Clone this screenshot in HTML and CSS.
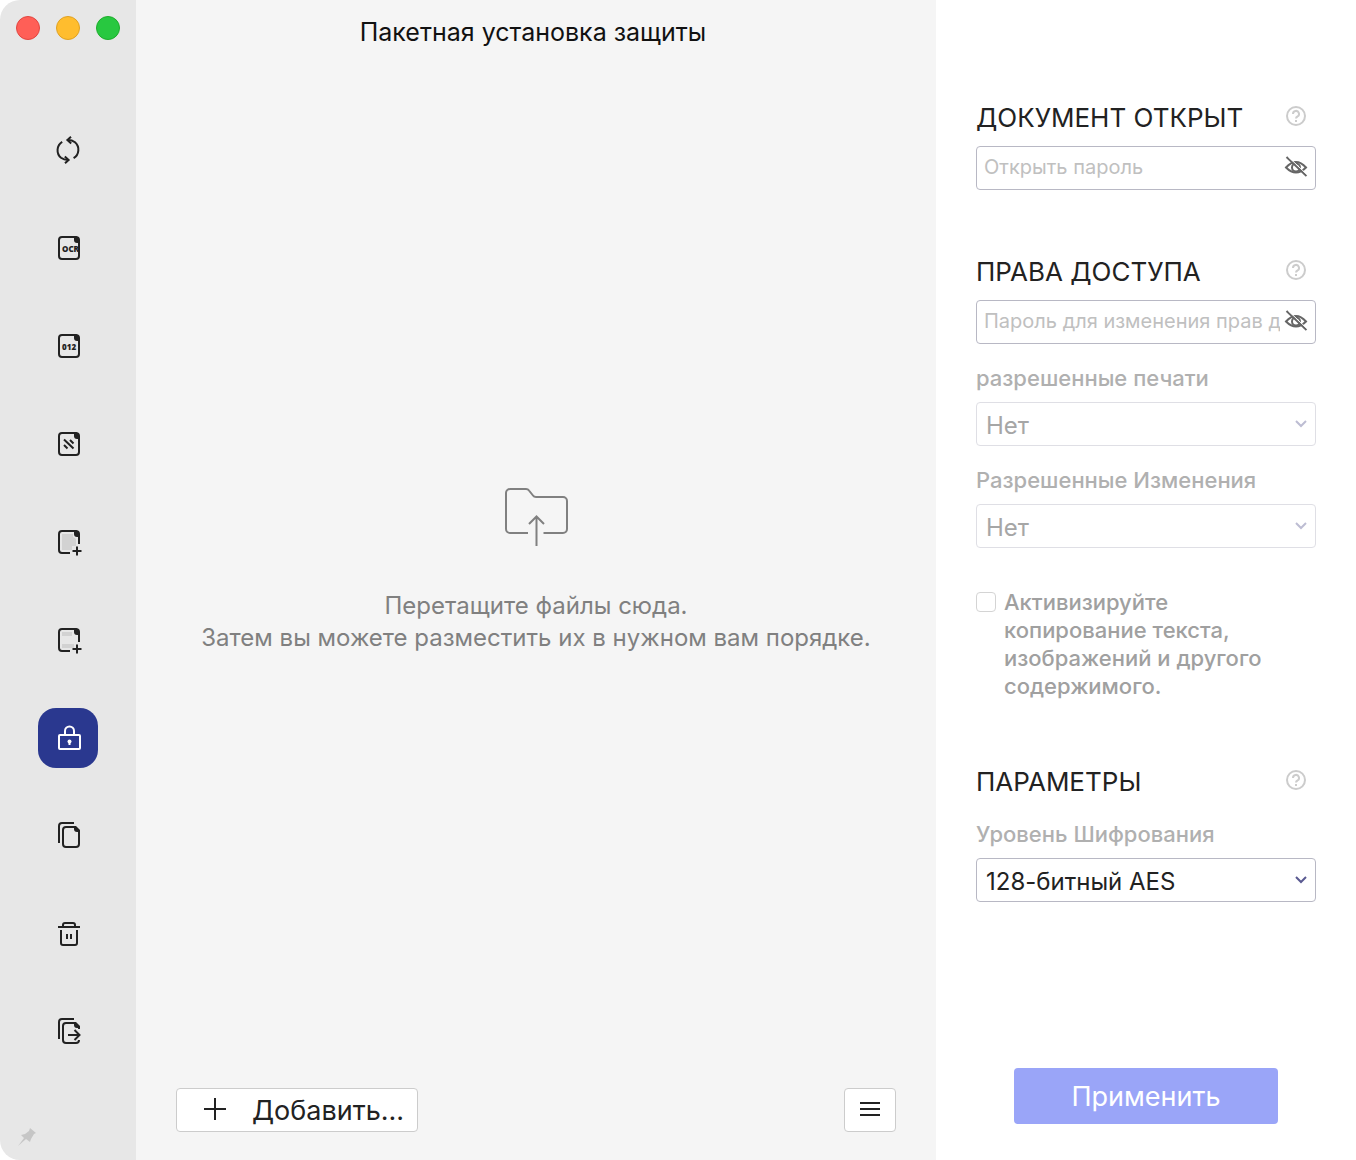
FILE: index.html
```html
<!DOCTYPE html>
<html lang="ru">
<head>
    <meta charset="UTF-8">
    <meta name="viewport" content="width=device-width, initial-scale=1.0">
    <title>Пакетная установка защиты</title>
    <link rel="stylesheet" href="styles.css">
</head>
<body>
    <div class="window">
        <!-- Sidebar -->
        <aside class="sidebar">
            <div class="window-controls">
                <button class="dot close" aria-label="Закрыть"></button>
                <button class="dot minimize" aria-label="Свернуть"></button>
                <button class="dot maximize" aria-label="Развернуть"></button>
            </div>
            <nav class="tools">
                <button class="tool" aria-label="Конвертировать">
                    <svg viewBox="0 0 32 32"><path d="M10.2 7.8A10 10 0 0 0 9 23.8c1.900 1.500 4 2.200 7.200 2.200M21.600 24.200A10 10 0 0 0 23 8.200C21.100 6.700 19 6 15.600 6"/><path d="M19 2.800 15.400 6l3.800 3.400M13 29.200l3.600-3.200-3.800-3.400"/></svg>
                </button>
                <button class="tool" aria-label="OCR">
                    <svg viewBox="0 0 32 32"><path d="M23 5H10a3 3 0 0 0-3 3v16a3 3 0 0 0 3 3h14a3 3 0 0 0 3-3V9"/><path class="solid" d="M22 4h2.500Q28 4.500 28 8v3h-3a3 3 0 0 1-3-3z"/><text x="10" y="20">OCR</text></svg>
                </button>
                <button class="tool" aria-label="Нумерация">
                    <svg viewBox="0 0 32 32"><path d="M23 5H10a3 3 0 0 0-3 3v16a3 3 0 0 0 3 3h14a3 3 0 0 0 3-3V9"/><path class="solid" d="M22 4h2.500Q28 4.500 28 8v3h-3a3 3 0 0 1-3-3z"/><text x="10" y="20">012</text></svg>
                </button>
                <button class="tool" aria-label="Водяной знак">
                    <svg viewBox="0 0 32 32"><path d="M23 5H10a3 3 0 0 0-3 3v16a3 3 0 0 0 3 3h14a3 3 0 0 0 3-3V9"/><path class="solid" d="M22 4h2.500Q28 4.500 28 8v3h-3a3 3 0 0 1-3-3z"/><path d="m12 11.500 9.500 9M18 12l3.500 3.500M12 17l3.500 3.500"/></svg>
                </button>
                <button class="tool" aria-label="Фон">
                    <svg viewBox="0 0 32 32"><path class="shade" d="M10 8h11v3l3 2v7h-4v4H10z"/><path d="M23 5H10a3 3 0 0 0-3 3v16a3 3 0 0 0 3 3h8M27 9v9M25 20.500v9M20.500 25h9"/><path class="solid" d="M22 4h2.500Q28 4.500 28 8v3h-3a3 3 0 0 1-3-3z"/></svg>
                </button>
                <button class="tool" aria-label="Колонтитулы">
                    <svg viewBox="0 0 32 32"><path class="shade" d="M10 8h10v4H10zM10 20h12v4H10z"/><path d="M23 5H10a3 3 0 0 0-3 3v16a3 3 0 0 0 3 3h8M27 9v9M25 20.500v9M20.500 25h9"/><path class="solid" d="M22 4h2.500Q28 4.500 28 8v3h-3a3 3 0 0 1-3-3z"/></svg>
                </button>
                <button class="tool active" aria-label="Защита">
                    <svg viewBox="0 0 32 32"><rect x="7" y="13" width="21" height="14" rx="1"/><path d="M13 13V9a4.500 4.500 0 0 1 9 0v4M17.500 20v3"/><circle class="solid" cx="17.500" cy="19.500" r="2"/></svg>
                </button>
                <button class="tool" aria-label="Страницы">
                    <svg viewBox="0 0 32 32"><path d="M7 23V6a3 3 0 0 1 3-3h12M23 7h-9a3 3 0 0 0-3 3v14a3 3 0 0 0 3 3h10a3 3 0 0 0 3-3V11"/><path class="solid" d="M22 6h2l4 4v2h-3a3 3 0 0 1-3-3z"/></svg>
                </button>
                <button class="tool" aria-label="Удалить">
                    <svg viewBox="0 0 32 32"><path d="M6 9h22M11 8V7a2 2 0 0 1 2-2h8a2 2 0 0 1 2 2v1M9 12v13a2 2 0 0 0 2 2h12a2 2 0 0 0 2-2V12M15 16v5M19 16v5"/></svg>
                </button>
                <button class="tool" aria-label="Извлечь">
                    <svg viewBox="0 0 32 32"><path d="M7 23V6a3 3 0 0 1 3-3h12M23 7h-9a3 3 0 0 0-3 3v14a3 3 0 0 0 3 3h10q3 0 3-3M16 19h11M22.500 14l5 5-5 5M27 11v2"/><path class="solid" d="M22 6h2l4 4v2h-3a3 3 0 0 1-3-3z"/></svg>
                </button>
            </nav>
            <button class="pin" aria-label="Закрепить">
                <svg viewBox="0 0 20 20"><path d="m13 1 6 5-2 1-3 5-1 3-4-3-8 7 6-8-3-3 4-1 4-3z"/></svg>
            </button>
        </aside>

        <!-- File drop area -->
        <main class="content">
            <h1 class="title">Пакетная установка защиты</h1>
            <div class="drop-area">
                <svg class="folder" viewBox="0 0 64 60"><path d="M24 46H6a4 4 0 0 1-4-4V6a4 4 0 0 1 4-4h16q2 0 3 1.500l4 5Q30 10 32 10h27a4 4 0 0 1 4 4v28a4 4 0 0 1-4 4H39.500M32.500 59V30M25 37l7.500-7.500L40 37"/></svg>
                <p>Перетащите файлы сюда.<br>Затем вы можете разместить их в нужном вам порядке.</p>
            </div>
            <div class="actions">
                <button class="add-button">
                    <svg viewBox="0 0 22 22"><path d="M11 0v22M0 11h22"/></svg>
                    Добавить...
                </button>
                <button class="menu-button" aria-label="Меню">
                    <svg viewBox="0 0 20 14"><path d="M0 1h20M0 7h20M0 13h20"/></svg>
                </button>
            </div>
        </main>

        <!-- Protection settings -->
        <form class="settings">
            <section class="group">
                <div class="group-header">
                    <h2><label for="open-password">ДОКУМЕНТ ОТКРЫТ</label></h2>
                    <button type="button" class="help" aria-label="Справка"><svg viewBox="0 0 20 20"><circle cx="10" cy="10" r="9"/><path d="M7 8a3 3 0 1 1 4.500 2.500Q10 11.300 10 12.500M10 14v2"/></svg></button>
                </div>
                <div class="password">
                    <input type="password" id="open-password" placeholder="Открыть пароль">
                    <button type="button" class="eye" aria-label="Показать пароль"><svg viewBox="0 0 24 22"><path d="M2 11.500q10-11 20 0-10 10-20 0z"/><circle cx="12" cy="11.500" r="4"/><path d="m2.500 1 20 19"/><path class="gap" d="m4.500 1 19 18"/></svg></button>
                </div>
            </section>

            <section class="group">
                <div class="group-header">
                    <h2><label for="rights-password">ПРАВА ДОСТУПА</label></h2>
                    <button type="button" class="help" aria-label="Справка"><svg viewBox="0 0 20 20"><circle cx="10" cy="10" r="9"/><path d="M7 8a3 3 0 1 1 4.500 2.500Q10 11.300 10 12.500M10 14v2"/></svg></button>
                </div>
                <div class="password">
                    <input type="password" id="rights-password" placeholder="Пароль для изменения прав доступа">
                    <button type="button" class="eye" aria-label="Показать пароль"><svg viewBox="0 0 24 22"><path d="M2 11.500q10-11 20 0-10 10-20 0z"/><circle cx="12" cy="11.500" r="4"/><path d="m2.500 1 20 19"/><path class="gap" d="m4.500 1 19 18"/></svg></button>
                </div>
                <div class="field">
                    <label for="printing">разрешенные печати</label>
                    <div class="select">
                        <select id="printing" disabled><option>Нет</option></select>
                        <svg viewBox="0 0 12 8"><path d="m1 1 5 5 5-5"/></svg>
                    </div>
                </div>
                <div class="field">
                    <label for="changes">Разрешенные Изменения</label>
                    <div class="select">
                        <select id="changes" disabled><option>Нет</option></select>
                        <svg viewBox="0 0 12 8"><path d="m1 1 5 5 5-5"/></svg>
                    </div>
                </div>
                <div class="check">
                    <input type="checkbox" id="copying" disabled>
                    <label for="copying">Активизируйте копирование текста, изображений и другого содержимого.</label>
                </div>
            </section>

            <section class="group">
                <div class="group-header">
                    <h2>ПАРАМЕТРЫ</h2>
                    <button type="button" class="help" aria-label="Справка"><svg viewBox="0 0 20 20"><circle cx="10" cy="10" r="9"/><path d="M7 8a3 3 0 1 1 4.500 2.500Q10 11.300 10 12.500M10 14v2"/></svg></button>
                </div>
                <div class="field">
                    <label for="level">Уровень Шифрования</label>
                    <div class="select">
                        <select id="level"><option>128-битный AES</option></select>
                        <svg viewBox="0 0 12 8"><path d="m1 1 5 5 5-5"/></svg>
                    </div>
                </div>
            </section>

            <button type="submit" class="apply" disabled>Применить</button>
        </form>
    </div>
</body>
</html>
```
FILE: styles.css
```css
* {
    box-sizing: border-box;
}

body {
    margin: 0;
    background: #fff;
    font-family: Inter, 'Liberation Sans', sans-serif;
    color: #222;
}

button, input, select {
    font-family: inherit;
    margin: 0;
}

button {
    padding: 0;
    border: none;
    background: none;
    cursor: pointer;
}

svg {
    display: block;
    fill: none;
    stroke: currentColor;
    stroke-width: 2;
}

.window {
    display: flex;
    min-height: 100vh;
    border-radius: 20px;
    overflow: hidden;
    background: #fff;
}

/* Sidebar */
.sidebar {
    display: flex;
    flex-direction: column;
    flex: 0 0 136px;
    background: #e7e7e7;
}

.window-controls {
    display: flex;
    gap: 16px;
    padding: 16px;
}

.dot {
    width: 24px;
    height: 24px;
    border-radius: 50%;
}

.close {
    background: #ff5f57;
    border: 1px solid #e14640;
}

.minimize {
    background: #ffbd2e;
    border: 1px solid #dfa123;
}

.maximize {
    background: #28c840;
    border: 1px solid #1dad2b;
}

.tools {
    display: flex;
    flex-direction: column;
    align-items: center;
    gap: 38px;
    margin-top: 64px;
}

.tool {
    display: flex;
    align-items: center;
    justify-content: center;
    width: 60px;
    height: 60px;
    border-radius: 18px;
    color: #222;
}

.tool.active {
    background: #2a388f;
    color: #fff;
}

.tool svg {
    width: 32px;
    height: 32px;
}

.tool text {
    font-family: 'Open Sans', sans-serif;
    font-size: 8px;
    font-weight: 800;
    fill: currentColor;
    stroke: none;
}

.solid {
    fill: currentColor;
    stroke: none;
}

.shade {
    fill: #d2d2d2;
    stroke: none;
}

.pin {
    margin: auto auto 13px 17px;
    color: #c6c6c6;
}

.pin svg {
    width: 20px;
    height: 20px;
    fill: currentColor;
    stroke: none;
}

/* Content */
.content {
    display: flex;
    flex-direction: column;
    flex: 1;
    background: #f5f5f5;
}

.title {
    height: 60px;
    margin: 0;
    padding: 16px 6px 0 0;
    font-size: 25px;
    font-weight: 400;
    line-height: 32px;
    text-align: center;
    color: #111;
}

.drop-area {
    display: flex;
    flex-direction: column;
    align-items: center;
    justify-content: center;
    flex: 1;
    gap: 43px;
    color: #808080;
}

.folder {
    width: 64px;
    height: 60px;
}

.drop-area p {
    margin: 0;
    font-size: 24px;
    line-height: 32px;
    text-align: center;
}

.actions {
    display: flex;
    justify-content: space-between;
    padding: 8px 40px 28px;
}

.add-button, .menu-button {
    display: flex;
    align-items: center;
    justify-content: center;
    height: 44px;
    background: #fff;
    border: 1px solid #ccc;
    border-radius: 4px;
    color: #222;
}

.add-button {
    gap: 26px;
    padding: 0 13px 0 27px;
    font-size: 27px;
}

.add-button svg {
    width: 22px;
    height: 22px;
    margin-bottom: 2px;
}

.menu-button {
    width: 52px;
}

.menu-button svg {
    width: 20px;
    height: 14px;
    margin-bottom: 2px;
}

/* Settings */
.settings {
    display: flex;
    flex-direction: column;
    flex: 0 0 420px;
    min-width: 0;
    padding: 102px 40px 36px;
}

.group {
    margin-bottom: 66px;
}

.group-header {
    display: flex;
    align-items: center;
    justify-content: space-between;
    padding-right: 10px;
}

h2 {
    margin: 0;
    font-size: 26px;
    font-weight: 400;
    line-height: 32px;
}

.help {
    margin-bottom: 4px;
    color: #ccc;
}

.help svg {
    width: 20px;
    height: 20px;
}

.password {
    display: flex;
    align-items: center;
    height: 44px;
    margin-top: 12px;
    padding: 0 7px 2px;
    border: 1px solid #b8b8c4;
    border-radius: 4px;
}

.password input {
    flex: 1;
    min-width: 0;
    padding: 0;
    border: none;
    outline: none;
    background: none;
    font-size: 20px;
}

.password input::placeholder {
    color: #c0c0c0;
}

.eye {
    margin-left: 4px;
    color: #666;
}

.eye svg {
    width: 24px;
    height: 22px;
}

.eye .gap {
    stroke: #fff;
    stroke-width: 1;
}

.field {
    margin-top: 20px;
}

.group-header + .field {
    margin-top: 22px;
}

.field label {
    display: block;
    margin-bottom: 10px;
    font-size: 22px;
    font-weight: 500;
    line-height: 28px;
    color: #b0b0b0;
}

.select {
    position: relative;
    color: #5a5a91;
}

.select select {
    display: block;
    width: 100%;
    height: 44px;
    padding: 2px 9px 0;
    border: 1px solid #b8b8c4;
    border-radius: 4px;
    appearance: none;
    background: #fff;
    font-size: 24px;
    color: #222;
}

.select select:disabled {
    border-color: #dfdfe5;
    color: #a6a6a6;
    opacity: 1;
}

.select svg {
    position: absolute;
    top: 18px;
    right: 9px;
    width: 12px;
    height: 8px;
    pointer-events: none;
}

.select select:disabled + svg {
    color: #bdbdd3;
}

.check {
    display: flex;
    align-items: flex-start;
    gap: 8px;
    margin-top: 40px;
}

.check input {
    flex: none;
    width: 20px;
    height: 20px;
    margin-top: 4px;
    border: 1px solid #d4d4d4;
    border-radius: 4px;
    appearance: none;
    background: #fff;
}

.check label {
    max-width: 270px;
    font-size: 22px;
    font-weight: 500;
    line-height: 28px;
    color: #a0a0a0;
}

.apply {
    align-self: center;
    width: 264px;
    height: 56px;
    margin-top: auto;
    border-radius: 4px;
    background: #9aa5f8;
    font-size: 27px;
    color: #fff;
}
```
